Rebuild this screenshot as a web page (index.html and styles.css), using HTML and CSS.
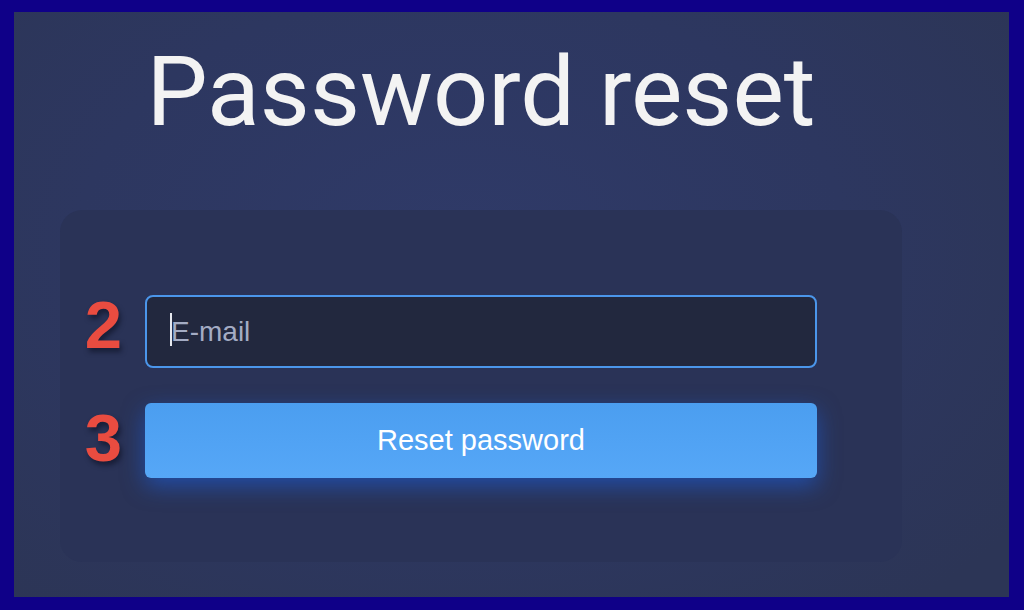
FILE: index.html
```html
<!DOCTYPE html>
<html lang="en">
<head>
<meta charset="utf-8">
<title>Password reset</title>
<link rel="stylesheet" href="styles.css">
</head>
<body>
<div class="frame">
  <main class="stage">
    <div class="column">
      <h1 class="title">Password reset</h1>
      <form class="card" onsubmit="return false">
        <div class="row">
          <span class="num num-2">2</span>
          <div class="field">
            <input class="email" type="email" placeholder="E-mail">
            <span class="caret"></span>
          </div>
        </div>
        <div class="row">
          <span class="num num-3">3</span>
          <button class="submit" type="submit">Reset password</button>
        </div>
      </form>
    </div>
  </main>
</div>
</body>
</html>
```

FILE: styles.css
```css
html, body {
  margin: 0;
  padding: 0;
}
body {
  background: #0f0088;
  font-family: "Liberation Sans", Arial, sans-serif;
}
.frame {
  width: 1024px;
  height: 610px;
  box-sizing: border-box;
  padding: 12px 15px 13px 14px;
}
.stage {
  height: 100%;
  background: radial-gradient(ellipse 70% 80% at 45% 40%, #2f3a68 0%, #2d3760 55%, #2c3556 100%);
  padding-top: 32px;
  box-sizing: border-box;
}
.column {
  width: 842px;
  margin-left: 46px;
}
.title {
  margin: 0;
  font-family: Roboto, "Liberation Sans", sans-serif;
  font-weight: 400;
  font-size: 97px;
  line-height: 96px;
  color: #f3f3f3;
  text-align: center;
}
.card {
  margin-top: 70px;
  height: 352px;
  box-sizing: border-box;
  padding: 85px 85px 84px;
  background: #2a3357;
  border-radius: 22px;
  display: flex;
  flex-direction: column;
  gap: 35px;
}
.row {
  position: relative;
  display: flex;
}
.num {
  position: absolute;
  right: calc(100% + 23px);
  font-family: "Liberation Sans", Arial, sans-serif;
  font-weight: 700;
  font-size: 67px;
  line-height: 67px;
  color: #e94c40;
  text-shadow: 2px 4px 5px rgba(10, 12, 30, 0.55);
}
.num-2 { top: -4px; }
.num-3 { top: 1px; }
.field {
  position: relative;
  flex: 1;
}
.email {
  display: block;
  width: 100%;
  height: 73px;
  box-sizing: border-box;
  margin: 0;
  padding: 0 0 0 24px;
  background: #22283e;
  border: 2px solid #4b96ea;
  border-radius: 8px;
  outline: none;
  font-family: "Liberation Sans", Arial, sans-serif;
  font-size: 28px;
  color: #e8ecf5;
  caret-color: transparent;
}
.email::placeholder {
  color: #a4acc4;
}
.caret {
  position: absolute;
  left: 25px;
  top: 18px;
  width: 2px;
  height: 33px;
  background: #e6e8ee;
}
.submit {
  flex: 1;
  height: 75px;
  margin: 0;
  border: none;
  border-radius: 6px;
  background: linear-gradient(180deg, #4b9ef0 0%, #56a7f7 100%);
  box-shadow: 0 8px 22px rgba(28, 98, 230, 0.55);
  font-family: "Liberation Sans", Arial, sans-serif;
  font-size: 29px;
  color: #ffffff;
  cursor: pointer;
}
```
